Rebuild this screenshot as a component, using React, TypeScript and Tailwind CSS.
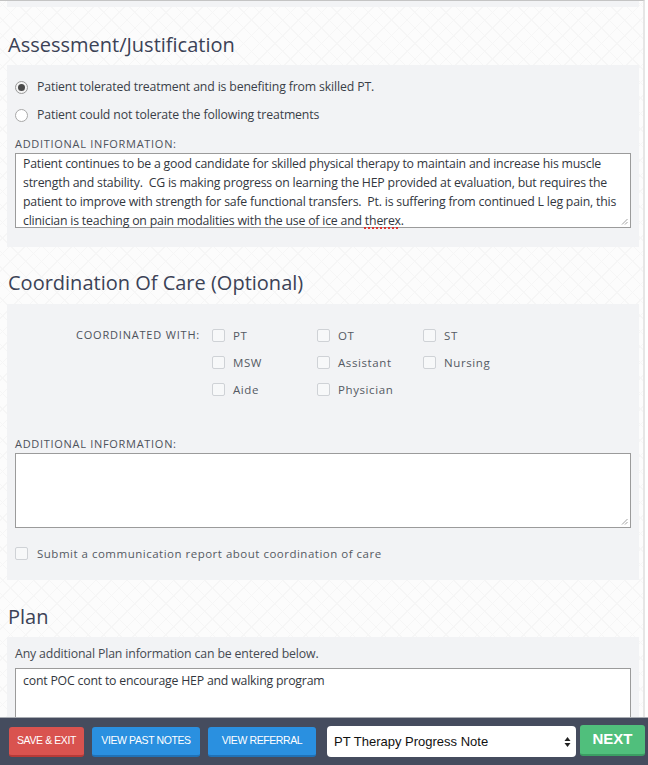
import React from 'react';

const Grip: React.FC = () => (
    <svg className="absolute right-[2px] bottom-[2px]" width="7" height="7" viewBox="0 0 7 7">
        <path d="M6.5 1 L1 6.5 M6.5 4 L4 6.5" stroke="#8a8a8a" strokeWidth="0.8" />
    </svg>
);

const Box: React.FC<{ label: string }> = ({ label }) => (
    <div className="flex items-center h-[27px]">
        <span className="w-[13px] h-[13px] border border-[#cfd2d6] rounded-[2px] bg-[#f7f8f9] mr-[8px]" />
        <span className="text-[11.5px] tracking-[0.6px] text-[#555a63]">{label}</span>
    </div>
);

const SectionTitle: React.FC<{ children: React.ReactNode }> = ({ children }) => (
    <h2 className="pl-[1px] text-[20px] leading-[28px] text-[#3b4256] font-normal">{children}</h2>
);

const FieldLabel: React.FC<{ children: React.ReactNode }> = ({ children }) => (
    <p className="text-[11px] leading-[16px] tracking-[0.7px] text-[#4d525b]">{children}</p>
);

export default function App() {
    return (
        <div className="relative w-[648px] h-[765px] overflow-hidden bg-white font-['Open_Sans',sans-serif]">
            <div className="w-[645px] h-full border-t border-t-[#c4c4c4] border-r-[2px] border-r-[#e6e6e6] pl-[7px] pr-[4px] bg-[#fcfcfc] bg-[repeating-linear-gradient(45deg,#f6f6f6_0_1px,transparent_1px_11px),repeating-linear-gradient(-45deg,#f6f6f6_0_1px,transparent_1px_11px)]">
                <div className="h-[6px] bg-[#f2f3f5]" />

                <div className="mt-[24px] mb-[6px]">
                    <SectionTitle>Assessment/Justification</SectionTitle>
                </div>
                <div className="bg-[#f2f3f5] px-[8px] pt-[8px] pb-[19px]">
                    <div className="flex items-center h-[28px]">
                        <span className="w-[13px] h-[13px] rounded-full border border-[#9a9a9a] bg-[#f4f4f4] flex items-center justify-center mr-[9px]">
                            <span className="w-[7px] h-[7px] rounded-full bg-[#4a4a4a]" />
                        </span>
                        <span className="text-[12.3px] tracking-[-0.15px] text-[#3a3f48]">Patient tolerated treatment and is benefiting from skilled PT.</span>
                    </div>
                    <div className="flex items-center h-[28px]">
                        <span className="w-[13px] h-[13px] rounded-full border border-[#a8a8a8] bg-white mr-[9px]" />
                        <span className="text-[12.3px] tracking-[-0.15px] text-[#3a3f48]">Patient could not tolerate the following treatments</span>
                    </div>
                    <div className="mt-[7px]">
                        <FieldLabel>ADDITIONAL INFORMATION:</FieldLabel>
                    </div>
                    <div className="relative mt-[1px] h-[75px] bg-white border border-[#9b9b9b] px-[7px] text-[12.3px] tracking-[-0.2px] leading-[19px] text-[#33373e] whitespace-pre">
                        {'Patient continues to be a good candidate for skilled physical therapy to maintain and increase his muscle\n'}
                        {'strength and stability.  CG is making progress on learning the HEP provided at evaluation, but requires the\n'}
                        {'patient to improve with strength for safe functional transfers.  Pt. is suffering from continued L leg pain, this\n'}
                        {'clinician is teaching on pain modalities with the use of ice and '}
                        <span className="underline decoration-dotted decoration-[#e0332f] decoration-[1.5px] underline-offset-[2px]">therex</span>.
                        <Grip />
                    </div>
                </div>

                <div className="mt-[22px] mb-[7px]">
                    <SectionTitle>Coordination Of Care (Optional)</SectionTitle>
                </div>
                <div className="bg-[#f2f3f5] px-[8px] pt-[18px] pb-[13px]">
                    <div className="flex">
                        <div className="w-[197px] pr-[12px] h-[27px] flex items-center justify-end text-[11px] tracking-[0.8px] text-[#4d525b]">COORDINATED WITH:</div>
                        <div className="grid grid-cols-[105px_106px_100px]">
                            <Box label="PT" />
                            <Box label="OT" />
                            <Box label="ST" />
                            <Box label="MSW" />
                            <Box label="Assistant" />
                            <Box label="Nursing" />
                            <Box label="Aide" />
                            <Box label="Physician" />
                        </div>
                    </div>
                    <div className="mt-[33px]">
                        <FieldLabel>ADDITIONAL INFORMATION:</FieldLabel>
                    </div>
                    <div className="relative mt-[1px] h-[75px] bg-white border border-[#9b9b9b]">
                        <Grip />
                    </div>
                    <div className="flex items-center h-[27px] mt-[12px]">
                        <span className="w-[13px] h-[13px] border border-[#cfd2d6] rounded-[2px] bg-[#f7f8f9] mr-[9px]" />
                        <span className="text-[11.5px] tracking-[0.5px] text-[#555a63]">Submit a communication report about coordination of care</span>
                    </div>
                </div>

                <div className="mt-[23px] mb-[6px]">
                    <SectionTitle>Plan</SectionTitle>
                </div>
                <div className="bg-[#f2f3f5] px-[8px] pt-[9px]">
                    <p className="text-[12.3px] tracking-[-0.15px] leading-[16px] text-[#454a52]">Any additional Plan information can be entered below.</p>
                    <div className="mt-[6px] h-[75px] bg-white border border-[#9b9b9b] px-[7px] pt-[2px] text-[12.3px] tracking-[-0.2px] leading-[19px] text-[#33373e]">
                        cont POC cont to encourage HEP and walking program
                    </div>
                </div>
            </div>

            <div className="absolute left-0 bottom-0 w-[648px] h-[48px] border-t border-t-[#a9adb3] bg-[#454c5e] font-['Liberation_Sans',Arial,sans-serif]">
                <div className="flex items-start pl-[9px] pt-[9px] gap-[8px]">
                    <button className="w-[75px] h-[30px] rounded-[3px] bg-[#d9534f] border-b-2 border-[#b83a37] text-white text-[10.5px] tracking-[-0.4px]">SAVE &amp; EXIT</button>
                    <button className="w-[108px] h-[30px] rounded-[3px] bg-[#2a90e0] border-b-2 border-[#1f72b8] text-white text-[10.5px] tracking-[-0.4px]">VIEW PAST NOTES</button>
                    <button className="w-[108px] h-[30px] rounded-[3px] bg-[#2a90e0] border-b-2 border-[#1f72b8] text-white text-[10.5px] tracking-[-0.4px]">VIEW REFERRAL</button>
                    <div className="ml-[3px] -mt-[1px] w-[249px] h-[31px] rounded-[4px] bg-white flex items-center justify-between pl-[7px] pr-[5px] text-[13px] text-[#111]">
                        <span>PT Therapy Progress Note</span>
                        <svg width="7" height="12" viewBox="0 0 7 12">
                            <path d="M3.5 1 L6.5 5 L0.5 5 Z M3.5 11 L6.5 7 L0.5 7 Z" fill="#222" />
                        </svg>
                    </div>
                    <button className="-ml-[4px] -mt-[2px] w-[65px] h-[31px] rounded-[3px] bg-[#50bf7c] border-b-2 border-[#3b9e63] text-white text-[15px] font-bold">NEXT</button>
                </div>
            </div>
        </div>
    );
}
